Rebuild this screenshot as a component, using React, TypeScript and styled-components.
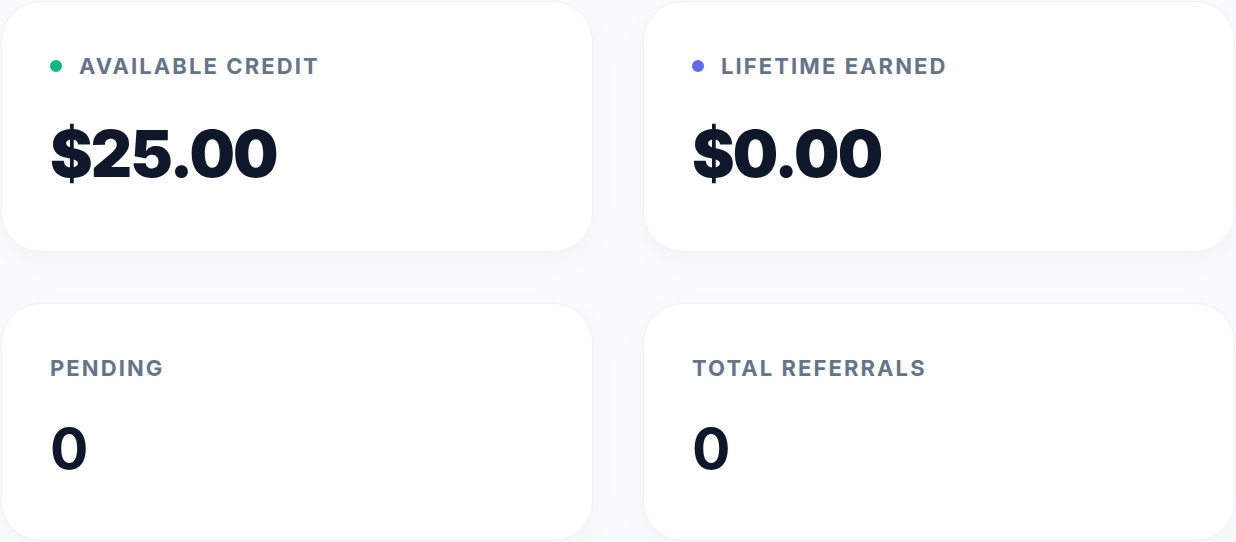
import React from "react";
import styled, { createGlobalStyle } from "styled-components";

const Global = createGlobalStyle`
  html, body { margin: 0; padding: 0; background: #fafbfc; }
  body { font-family: Inter, "Noto Sans", sans-serif; -webkit-font-smoothing: antialiased; }
`;

const Grid = styled.div`
  display: grid;
  grid-template-columns: 1fr 1fr;
  column-gap: 50px;
  row-gap: 51px;
  padding: 1px 1px 0 1px;
  width: 1236px;
  box-sizing: border-box;
`;

const Card = styled.div<{ $pt: number; $gap: number; $pb: number }>`
  display: flex;
  flex-direction: column;
  gap: ${(p) => p.$gap}px;
  padding: ${(p) => p.$pt}px 48px ${(p) => p.$pb}px 48px;
  background: #ffffff;
  border: 1px solid #eef2f6;
  border-radius: 40px;
  box-shadow: 0 8px 28px rgba(15, 23, 42, 0.035);
`;

const Label = styled.div`
  display: flex;
  align-items: center;
  gap: 17px;
  font-size: 22px;
  line-height: 22px;
  font-weight: 650;
  letter-spacing: 0.095em;
  color: #64748b;
  text-transform: uppercase;
`;

const Dot = styled.span<{ $color: string }>`
  width: 12px;
  height: 12px;
  border-radius: 50%;
  background: ${(p) => p.$color};
  flex: none;
`;

const Value = styled.div<{ $size: number; $weight: number; $ls: number }>`
  font-size: ${(p) => p.$size}px;
  line-height: 1;
  font-weight: ${(p) => p.$weight};
  letter-spacing: ${(p) => p.$ls}em;
  color: #0f172a;
`;

const stats = [
  { label: "Available Credit", value: "$25.00", dot: "#10b981", big: true },
  { label: "Lifetime Earned", value: "$0.00", dot: "#6366f1", big: true },
  { label: "Pending", value: "0", big: false },
  { label: "Total Referrals", value: "0", big: false },
];

export default function App() {
  return (
    <>
      <Global />
      <Grid>
        {stats.map((s) => (
          <Card
            key={s.label}
            $pt={53}
            $gap={s.big ? 45 : 41}
            $pb={s.big ? 65 : 63}
          >
            <Label>
              {s.dot && <Dot $color={s.dot} />}
              {s.label}
            </Label>
            <Value
              $size={s.big ? 64 : 57}
              $weight={s.big ? 900 : 700}
              $ls={s.big ? -0.03 : -0.02}
            >
              {s.value}
            </Value>
          </Card>
        ))}
      </Grid>
    </>
  );
}
